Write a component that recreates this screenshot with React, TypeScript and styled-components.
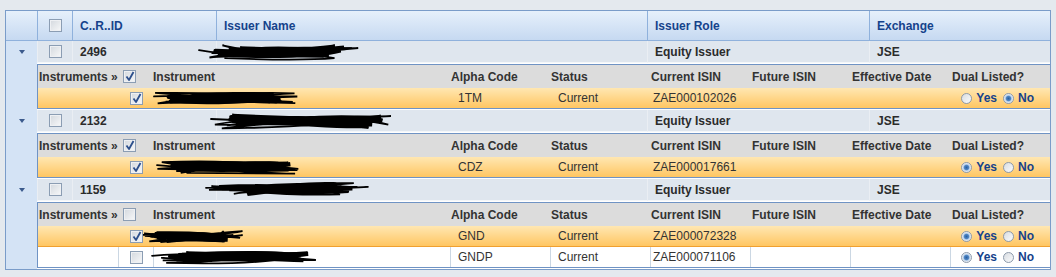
import React from 'react';
import styled, { createGlobalStyle } from 'styled-components';

const GlobalStyle = createGlobalStyle`
  body {
    margin: 0;
    background: #e4e9ee;
    font-family: "Liberation Sans", Arial, sans-serif;
  }
`;

const masterCols = '31px 35px 144px 431px 222px 1fr';
const detailCols = '80px 35px 297px repeat(5, 100px) 1fr';

const Page = styled.div`
  padding: 10px 5px 0;
  height: 277px;
  box-sizing: border-box;
`;

const Grid = styled.div`
  width: 1046px;
  box-sizing: border-box;
  border: 1px solid #7a9cc9;
  background: #fff;
`;

const HeaderRow = styled.div`
  display: grid;
  grid-template-columns: ${masterCols};
  height: 30px;
  box-sizing: border-box;
  background: linear-gradient(#e6f0fb, #c6d9f1);
  border-bottom: 1px solid #8fb1dc;
`;

const HeaderCell = styled.div<{ $center?: boolean }>`
  display: flex;
  align-items: center;
  justify-content: ${(p) => (p.$center ? 'center' : 'flex-start')};
  padding-left: ${(p) => (p.$center ? 0 : 7)}px;
  border-left: 1px solid #8fb1dc;
  font-size: 12px;
  font-weight: bold;
  color: #15428b;
  white-space: nowrap;
  &:first-child {
    border-left: none;
  }
`;

const MasterRow = styled.div`
  display: grid;
  grid-template-columns: ${masterCols};
  height: 22px;
`;

const Gutter = styled.div`
  background: #d4e3f5;
  display: flex;
  align-items: center;
  justify-content: center;
`;

const ExpandArrow = styled.span`
  width: 0;
  height: 0;
  border-left: 3.5px solid transparent;
  border-right: 3.5px solid transparent;
  border-top: 4px solid #3b5a8c;
  margin-top: -1px;
`;

const MasterCell = styled.div<{ $center?: boolean }>`
  display: flex;
  align-items: center;
  justify-content: ${(p) => (p.$center ? 'center' : 'flex-start')};
  padding-left: ${(p) => (p.$center ? 0 : 7)}px;
  background: #dfe6ee;
  border-left: 1px solid #eaeef3;
  border-bottom: 1px solid #f4f7fa;
  font-size: 12px;
  font-weight: bold;
  color: #2b2b2b;
  white-space: nowrap;
`;

const DetailRow = styled.div`
  display: grid;
  grid-template-columns: 31px 1fr;
`;

const DetailBody = styled.div`
  padding: 1px 0;
  background: #fff;
`;

const Inner = styled.div`
  border: 1px solid #6f93c4;
  border-right: none;
`;

const InnerHeader = styled.div`
  display: grid;
  grid-template-columns: ${detailCols};
  height: 23px;
  background: #dcdcdc;
  font-size: 12px;
  font-weight: bold;
  color: #333;
`;

const InnerHeadCell = styled.div<{ $pad: number }>`
  display: flex;
  align-items: center;
  padding-left: ${(p) => p.$pad}px;
  white-space: nowrap;
`;

const DataRow = styled.div<{ $selected: boolean }>`
  display: grid;
  grid-template-columns: ${detailCols};
  height: 21px;
  box-sizing: border-box;
  background: ${(p) => (p.$selected ? 'linear-gradient(#ffe7b2, #ffc662)' : '#fff')};
  border-bottom: 1px solid ${(p) => (p.$selected ? '#f0a030' : '#cdd9e6')};
  font-size: 12px;
  color: #333;
  &:last-child {
    border-bottom: none;
    height: 20px;
  }
`;

const DataCell = styled.div<{ $pad?: number; $divider: boolean; $align?: string }>`
  display: flex;
  align-items: center;
  justify-content: ${(p) => p.$align || 'flex-start'};
  padding-left: ${(p) => p.$pad || 0}px;
  padding-right: ${(p) => (p.$align === 'flex-end' ? 16 : 0)}px;
  border-left: 1px solid ${(p) => (p.$divider ? '#cbd7e3' : 'transparent')};
  white-space: nowrap;
  &:first-child {
    border-left: none;
  }
`;

const Box = styled.span`
  position: relative;
  display: inline-block;
  width: 13px;
  height: 13px;
  box-sizing: border-box;
  border: 1px solid #8b9db3;
  background: linear-gradient(135deg, #d3d8de, #f7f8f9);
  box-shadow: inset 0 0 0 1px #eef0f3;
  svg {
    position: absolute;
    left: 1px;
    top: 0px;
  }
`;

const CheckBox = ({ checked }: { checked: boolean }) => (
  <Box>
    {checked && (
      <svg width="10" height="11" viewBox="0 0 10 11">
        <path d="M1.5 5.5 L4 9 L8.5 1" stroke="#2c4f8c" strokeWidth="1.8" fill="none" strokeLinejoin="round" />
      </svg>
    )}
  </Box>
);

const RadioGroup = styled.div`
  display: flex;
  align-items: center;
  font-weight: bold;
  color: #15428b;
`;

const RadioLabel = styled.span`
  display: flex;
  align-items: center;
  margin-left: 6px;
  &:first-child {
    margin-left: 0;
  }
`;

const RadioDot = styled.span<{ $on: boolean }>`
  width: 11px;
  height: 11px;
  box-sizing: border-box;
  border-radius: 50%;
  border: 1px solid #8d9aab;
  background: ${(p) =>
    p.$on
      ? 'radial-gradient(circle, #2a5f9f 0, #4f86c4 2.2px, #b9d0ea 3.2px, #eef1f4 4.5px)'
      : 'linear-gradient(135deg, #d8dce1, #fafbfc)'};
  margin-right: 4px;
`;

const Radios = ({ value }: { value: 'Yes' | 'No' }) => (
  <RadioGroup>
    {(['Yes', 'No'] as const).map((v) => (
      <RadioLabel key={v}>
        <RadioDot $on={value === v} />
        {v}
      </RadioLabel>
    ))}
  </RadioGroup>
);

// hand-drawn redaction marks over the issuer / instrument names
const makeScribble = (w: number, h: number, seed: number, passes: number) => {
  let s = seed;
  const rnd = () => {
    s = (s * 16807) % 2147483647;
    return s / 2147483647;
  };
  let d = `M 1 ${(h * (0.4 + rnd() * 0.3)).toFixed(1)}`;
  for (let i = 0; i < passes; i++) {
    const right = i % 2 === 0;
    const x = right ? w - 1 - rnd() * w * 0.2 : 1 + rnd() * w * 0.2;
    const y = h * (0.12 + rnd() * 0.76);
    const cx = w * (0.25 + rnd() * 0.5);
    const cy = h * (0.0 + rnd() * 1.0);
    d += ` Q ${cx.toFixed(1)} ${cy.toFixed(1)} ${x.toFixed(1)} ${y.toFixed(1)}`;
  }
  return d;
};

const ScribbleSvg = styled.svg<{ $dx: number }>`
  display: block;
  flex: none;
  margin-left: ${(p) => p.$dx}px;
  overflow: visible;
`;

const Scribble = ({ w, h, dx, seed }: { w: number; h: number; dx: number; seed: number }) => (
  <ScribbleSvg $dx={dx} width={w} height={h} viewBox={`0 0 ${w} ${h}`}>
    <path d={makeScribble(w, h, seed, 12)} stroke="#000" strokeWidth="1.8" fill="none" strokeLinecap="round" />
    <g transform={`translate(${w * 0.1} ${h * 0.15})`}>
      <path d={makeScribble(w * 0.8, h * 0.7, seed * 7 + 3, 14)} stroke="#000" strokeWidth="4" fill="none" strokeLinecap="round" />
    </g>
  </ScribbleSvg>
);

type Mark = { w: number; h: number; dx: number; seed: number };
type Instrument = {
  checked: boolean;
  selected: boolean;
  alpha: string;
  isin: string;
  dual: 'Yes' | 'No';
  mark: Mark;
};
type Issuer = {
  id: string;
  allChecked: boolean;
  mark: Mark;
  instruments: Instrument[];
};

const issuers: Issuer[] = [
  {
    id: '2496',
    allChecked: true,
    mark: { w: 164, h: 18, dx: -26, seed: 11 },
    instruments: [
      { checked: true, selected: true, alpha: '1TM', isin: 'ZAE000102026', dual: 'No', mark: { w: 146, h: 16, dx: -1, seed: 23 } },
    ],
  },
  {
    id: '2132',
    allChecked: true,
    mark: { w: 193, h: 20, dx: -14, seed: 37 },
    instruments: [
      { checked: true, selected: true, alpha: 'CDZ', isin: 'ZAE000017661', dual: 'Yes', mark: { w: 152, h: 18, dx: 2, seed: 41 } },
    ],
  },
  {
    id: '1159',
    allChecked: false,
    mark: { w: 167, h: 17, dx: -19, seed: 53 },
    instruments: [
      { checked: true, selected: true, alpha: 'GND', isin: 'ZAE000072328', dual: 'Yes', mark: { w: 103, h: 17, dx: -13, seed: 61 } },
      { checked: false, selected: false, alpha: 'GNDP', isin: 'ZAE000071106', dual: 'Yes', mark: { w: 180, h: 17, dx: -3, seed: 79 } },
    ],
  },
];

const innerHeads: [string, number][] = [
  ['Instrument', 0],
  ['Alpha Code', 1],
  ['Status', 1],
  ['Current ISIN', 1],
  ['Future ISIN', 2],
  ['Effective Date', 2],
  ['Dual Listed?', 2],
];

const App = () => {
  return (
    <Page>
      <GlobalStyle />
      <Grid>
        <HeaderRow>
          <HeaderCell />
          <HeaderCell $center>
            <CheckBox checked={false} />
          </HeaderCell>
          <HeaderCell>C..R..ID</HeaderCell>
          <HeaderCell>Issuer Name</HeaderCell>
          <HeaderCell>Issuer Role</HeaderCell>
          <HeaderCell>Exchange</HeaderCell>
        </HeaderRow>
        {issuers.map((iss) => (
          <React.Fragment key={iss.id}>
            <MasterRow>
              <Gutter>
                <ExpandArrow />
              </Gutter>
              <MasterCell $center>
                <CheckBox checked={false} />
              </MasterCell>
              <MasterCell>{iss.id}</MasterCell>
              <MasterCell>
                <Scribble {...iss.mark} />
              </MasterCell>
              <MasterCell>Equity Issuer</MasterCell>
              <MasterCell>JSE</MasterCell>
            </MasterRow>
            <DetailRow>
              <Gutter />
              <DetailBody>
                <Inner>
                  <InnerHeader>
                    <InnerHeadCell $pad={1}>Instruments »</InnerHeadCell>
                    <InnerHeadCell $pad={5}>
                      <CheckBox checked={iss.allChecked} />
                    </InnerHeadCell>
                    {innerHeads.map(([label, pad]) => (
                      <InnerHeadCell key={label} $pad={pad}>
                        {label}
                      </InnerHeadCell>
                    ))}
                  </InnerHeader>
                  {iss.instruments.map((ins) => {
                    const div = !ins.selected;
                    return (
                      <DataRow key={ins.alpha} $selected={ins.selected}>
                        <DataCell $divider={div} />
                        <DataCell $divider={div} $align="center">
                          <CheckBox checked={ins.checked} />
                        </DataCell>
                        <DataCell $divider={div}>
                          <Scribble {...ins.mark} />
                        </DataCell>
                        <DataCell $divider={div} $pad={7}>{ins.alpha}</DataCell>
                        <DataCell $divider={div} $pad={7}>Current</DataCell>
                        <DataCell $divider={div} $pad={2}>{ins.isin}</DataCell>
                        <DataCell $divider={div} />
                        <DataCell $divider={div} />
                        <DataCell $divider={div} $align="flex-end">
                          <Radios value={ins.dual} />
                        </DataCell>
                      </DataRow>
                    );
                  })}
                </Inner>
              </DetailBody>
            </DetailRow>
          </React.Fragment>
        ))}
      </Grid>
    </Page>
  );
};

export default App;
